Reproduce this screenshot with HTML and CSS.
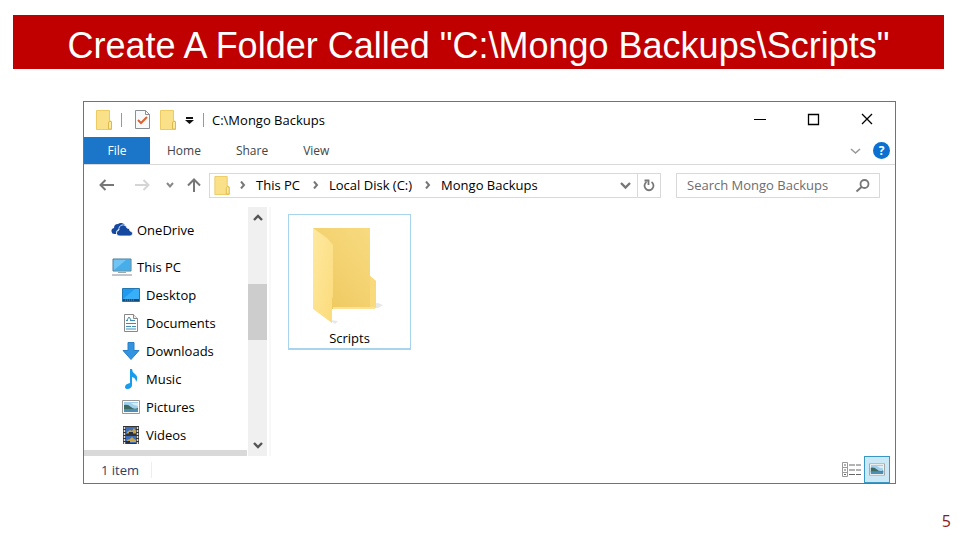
FILE: index.html
```html
<!DOCTYPE html>
<html lang="en">
<head>
    <meta charset="UTF-8">
    <meta name="viewport" content="width=device-width, initial-scale=1.0">
    <title>Create A Folder</title>
    <link rel="stylesheet" href="styles.css">
</head>
<body>
    <!-- Shared icons -->
    <svg class="defs" width="0" height="0" aria-hidden="true">
        <symbol id="folder" viewBox="0 0 16 20">
            <path d="M0.500 0.500h13v10l2 1v8h-15z" fill="#fbe08a" stroke="#eccb63"/>
            <path d="M12.500 19v-6l1-2 2 1v7z" fill="#fdeaa5" stroke="#dfb94a"/>
        </symbol>
        <symbol id="chevron" viewBox="0 0 8 8">
            <path d="M2 0.500l3 3.500-3 3.500" fill="none" stroke="#777" stroke-width="2"/>
        </symbol>
        <symbol id="picture" viewBox="0 0 18 14">
            <path d="M0.500 0.500h17v13h-17z" fill="#fff" stroke="#999"/>
            <path d="M2 2h14v10h-14z" fill="#9fd0ee"/>
            <path d="M2 5q4-1 7 2t7 1v2h-14z" fill="#3d6b63"/>
            <path d="M2 9h14v3h-14z" fill="#4b8fb5"/>
            <path d="M9 3h7v3q-4 0-7-3z" fill="#d9edf8"/>
        </symbol>
    </svg>

    <h1 class="slide-title">Create A Folder Called "C:\Mongo Backups\Scripts"</h1>

    <div class="window">
        <div class="title-bar">
            <svg class="small-folder" width="16" height="20"><use href="#folder"/></svg>
            <span class="divider"></span>
            <button class="icon-button" aria-label="Properties">
                <svg width="15" height="19" viewBox="0 0 15 19">
                    <path d="M0.500 0.500h10l4 4v14h-14z" fill="#f7f9fb" stroke="#8a8f96"/>
                    <path d="M10.500 0.500v4h4" fill="none" stroke="#8a8f96"/>
                    <path d="M3 10l3 3 6-6" fill="none" stroke="#dd6230" stroke-width="2"/>
                </svg>
            </button>
            <button class="icon-button new-folder" aria-label="New folder">
                <svg width="16" height="20"><use href="#folder"/></svg>
            </button>
            <button class="icon-button" aria-label="Customize toolbar">
                <svg width="9" height="8" viewBox="0 0 9 8">
                    <path d="M1 1h7v2h-7zM0 4h9l-4.500 4z" fill="#111"/>
                </svg>
            </button>
            <span class="divider"></span>
            <span class="window-title">C:\Mongo Backups</span>
            <div class="controls">
                <button class="icon-button" aria-label="Minimize">
                    <svg width="12" height="12"><path d="M0 5.500h12" stroke="#000"/></svg>
                </button>
                <button class="icon-button" aria-label="Maximize">
                    <svg width="12" height="12"><path d="M0.500 0.500h10v10h-10z" fill="none" stroke="#000" stroke-width="1.300"/></svg>
                </button>
                <button class="icon-button" aria-label="Close">
                    <svg width="12" height="12"><path d="M0 0l10 10M10 0l-10 10" stroke="#000" stroke-width="1.300"/></svg>
                </button>
            </div>
        </div>

        <div class="tabs">
            <button class="tab file">File</button>
            <button class="tab">Home</button>
            <button class="tab">Share</button>
            <button class="tab">View</button>
            <div class="help">
                <button class="icon-button" aria-label="Expand the ribbon">
                    <svg width="11" height="6"><path d="M1 1l4.500 4 4.500-4" fill="none" stroke="#999" stroke-width="1.600"/></svg>
                </button>
                <button class="help-button" aria-label="Help">?</button>
            </div>
        </div>

        <div class="address-row">
            <button class="icon-button" aria-label="Back">
                <svg width="15" height="12"><path d="M15 6h-13M6.500 1l-5 5 5 5" fill="none" stroke="#777" stroke-width="2"/></svg>
            </button>
            <button class="icon-button forward" aria-label="Forward">
                <svg width="15" height="12"><path d="M0 6h13M8.500 1l5 5-5 5" fill="none" stroke="#d5d5d5" stroke-width="2"/></svg>
            </button>
            <button class="icon-button" aria-label="Recent locations">
                <svg width="8" height="6"><path d="M1 1l3 3.500 3-3.500" fill="none" stroke="#888" stroke-width="2"/></svg>
            </button>
            <button class="icon-button up" aria-label="Up">
                <svg width="14" height="14"><path d="M7 14v-12M1 7.500l6-6 6 6" fill="none" stroke="#777" stroke-width="2"/></svg>
            </button>
            <div class="address">
                <svg width="16" height="19"><use href="#folder"/></svg>
                <svg width="8" height="8"><use href="#chevron"/></svg>
                <a href="#">This PC</a>
                <svg width="8" height="8"><use href="#chevron"/></svg>
                <a href="#">Local Disk (C:)</a>
                <svg width="8" height="8"><use href="#chevron"/></svg>
                <a href="#">Mongo Backups</a>
                <div class="address-buttons">
                    <button class="icon-button" aria-label="Previous locations">
                        <svg width="11" height="7"><path d="M1 1l4.500 4.500 4.500-4.500" fill="none" stroke="#777" stroke-width="2.400"/></svg>
                    </button>
                    <button class="icon-button refresh" aria-label="Refresh">
                        <svg width="12" height="13"><path d="M8.500 3a4.500 4.500 0 1 1-5 0M1.500 1.500h4v4.500" fill="none" stroke="#777" stroke-width="1.800"/></svg>
                    </button>
                </div>
            </div>
            <div class="search">
                <input type="text" aria-label="Search" placeholder="Search Mongo Backups">
                <svg width="14" height="13"><circle cx="8.500" cy="5" r="4" fill="none" stroke="#777" stroke-width="1.800"/><path d="M5.500 8l-5 4.500" stroke="#777" stroke-width="2"/></svg>
            </div>
        </div>

        <div class="content">
            <div class="sidebar">
                <ul class="tree">
                    <li class="root">
                        <svg width="20" height="14" viewBox="0 0 20 14">
                            <path d="M3 11a3 3 0 0 1-1-6 4 4 0 0 1 4-4 5 5 0 0 1 7 1l-2 1q-3 0-4 3-3 1-3 5z" fill="#1549a0"/>
                            <path d="M8 13a3 3 0 0 1-1-6 4 4 0 0 1 8-2 3 3 0 0 1 3 3 2.500 2.500 0 0 1 0 5z" fill="#1549a0" stroke="#fff" stroke-width="0.800"/>
                        </svg>
                        <a href="#">OneDrive</a>
                    </li>
                    <li class="root">
                        <svg width="20" height="18" viewBox="0 0 20 18">
                            <path d="M1 1h18v12h-18z" fill="#70c5f5" stroke="#477f9e"/>
                            <path d="M2 12l12-10h4v10z" fill="#48aeea"/>
                            <path d="M6 14.500h8" stroke="#9aa"/>
                            <path d="M0 17h20" stroke="#889"/>
                        </svg>
                        <a href="#">This PC</a>
                    </li>
                    <li>
                        <svg width="18" height="14" viewBox="0 0 18 14">
                            <path d="M0.500 0.500h17v13h-17z" fill="#1e9bf0" stroke="#2476b0"/>
                            <path d="M1 11l12-10h4v10z" fill="#38aff8"/>
                            <path d="M1 12h16" stroke="#134a77" stroke-width="2"/>
                            <path d="M3 12h9" stroke="#3aa5e8" stroke-dasharray="1 1"/>
                        </svg>
                        <a href="#">Desktop</a>
                    </li>
                    <li>
                        <svg width="18" height="18" viewBox="0 0 18 18">
                            <path d="M2.500 0.500h9l4 4v13h-13z" fill="#fff" stroke="#888"/>
                            <path d="M11.500 0.500v4h4" fill="#eee" stroke="#888"/>
                            <path d="M4 6.500h2M8 6.500h5M4 9.500h10M4 12.500h5M10 12.500h4M4 15h10" stroke="#3d8fb5"/>
                            <path d="M5 6l2-3 2 3" fill="none" stroke="#3d8fb5"/>
                        </svg>
                        <a href="#">Documents</a>
                    </li>
                    <li>
                        <svg width="18" height="18" viewBox="0 0 18 18">
                            <path d="M6 0.500h6v8h5l-8 9-8-9h5z" fill="#3293e0" stroke="#2a7fc4"/>
                        </svg>
                        <a href="#">Downloads</a>
                    </li>
                    <li>
                        <svg width="18" height="20" viewBox="0 0 18 20">
                            <path d="M8 0h2q0 3 3 5 4 3 1 8 0-4-4-5v8q0 3-4 4-3 0-3-2 0-3 5-4z" fill="#189cec"/>
                        </svg>
                        <a href="#">Music</a>
                    </li>
                    <li>
                        <svg width="18" height="14"><use href="#picture"/></svg>
                        <a href="#">Pictures</a>
                    </li>
                    <li>
                        <svg width="18" height="18" viewBox="0 0 18 18">
                            <path d="M1 0h16v18h-16z" fill="#333"/>
                            <path d="M2.500 1v17M15.500 1v17" stroke="#ddd" stroke-width="1.500" stroke-dasharray="2 1"/>
                            <path d="M4 1h10v7h-10zM4 10h10v7h-10z" fill="#3e6eb8"/>
                            <path d="M5 6l3-2 2 1 2-3 2 3v2h-9zM5 14l3-1 2-2 2 2 2 1v2h-9z" fill="#c9a547"/>
                            <path d="M7 6h4v2h-4zM4 15h4v2h-4z" fill="#282c44"/>
                        </svg>
                        <a href="#">Videos</a>
                    </li>
                </ul>
                <div class="scrollbar">
                    <svg width="10" height="7"><path d="M1 6l4-4 4 4" fill="none" stroke="#555" stroke-width="2.400"/></svg>
                    <div class="thumb"></div>
                    <svg width="10" height="7"><path d="M1 1l4 4 4-4" fill="none" stroke="#555" stroke-width="2.400"/></svg>
                </div>
            </div>
            <div class="files">
                <a class="file-item" href="#">
                    <svg width="68" height="98" viewBox="0 0 68 98">
                        <defs>
                            <linearGradient id="back" x1="1" y1="0" x2="0" y2="1">
                                <stop offset="0" stop-color="#f8dc82"/>
                                <stop offset="1" stop-color="#eec75d"/>
                            </linearGradient>
                            <linearGradient id="front" x1="0" y1="0" x2="1" y2="1">
                                <stop offset="0" stop-color="#ffe9a0"/>
                                <stop offset="1" stop-color="#fbdb7b"/>
                            </linearGradient>
                        </defs>
                        <path d="M16 81h46l5-3-5-2zM14 93l8 1-3 3z" fill="#e8e8e8"/>
                        <path d="M-3 1h57v48l6 5v26l-2 2h-44z" fill="url(#back)"/>
                        <path d="M17 80h42v1l-1 1h-41z" fill="#fbe296"/>
                        <path d="M54 49l6 5v26h-6z" fill="#f8da7c"/>
                        <path d="M-3 1l14 10 6 7v51l-1 3v24l-19-14z" fill="url(#front)"/>
                    </svg>
                    <span>Scripts</span>
                </a>
            </div>
        </div>

        <div class="status-bar">
            <span class="item-count">1 item</span>
            <div class="views">
                <button class="icon-button" aria-label="Details view">
                    <svg width="20" height="16" viewBox="0 0 20 16">
                        <path d="M0.500 0.500h5v5h-5zM0.500 5.500h5v5h-5zM0.500 10.500h5v4h-5z" fill="#fff" stroke="#999"/>
                        <path d="M2 3h2M2 8h2M2 12.500h2M7 3h6M14 3h5M7 8h6M14 8h5M7 12.500h6M14 12.500h5" stroke="#666"/>
                    </svg>
                </button>
                <button class="view-active" aria-label="Large icons view">
                    <svg width="16" height="13" viewBox="0 0 18 14"><use href="#picture"/></svg>
                </button>
            </div>
        </div>
    </div>

    <footer>5</footer>
</body>
</html>
```
FILE: styles.css
```css
* {
    box-sizing: border-box;
}

body {
    margin: 0;
    padding: 15px 0 8px;
    min-height: 100vh;
    display: flex;
    flex-direction: column;
    background-color: #fff;
    color: #000;
    font-family: "Open Sans", "Noto Sans", sans-serif;
    font-size: 13px;
    line-height: 16px;
}

.defs {
    position: absolute;
}

svg {
    display: block;
    flex: none;
    overflow: visible;
}

a {
    color: inherit;
    text-decoration: none;
    white-space: nowrap;
}

button {
    border: 0;
    padding: 0;
    background: none;
    font: inherit;
    color: inherit;
}

.slide-title {
    margin: 0 16px 0 13px;
    padding: 11px 0 3px;
    background-color: #c00000;
    color: #fff;
    font-family: "Liberation Sans", Arial, sans-serif;
    font-size: 36px;
    font-weight: normal;
    line-height: 40px;
    text-align: center;
}

/* Explorer window */
.window {
    margin: 32px 64px 0 83px;
    border: 1px solid #3a86a5;
}

.title-bar {
    display: flex;
    align-items: center;
    height: 35px;
    padding: 0 21px 0 12px;
}

.divider {
    width: 1px;
    height: 14px;
    margin: 0 13px 0 9px;
    background-color: #999;
}

.new-folder {
    margin: 0 9px 0 10px;
}

.title-bar .icon-button + .divider {
    margin-right: 8px;
}

.controls {
    display: flex;
    gap: 42px;
    margin-left: auto;
}

.tabs {
    display: flex;
    height: 28px;
    border-bottom: 1px solid #d9d9d9;
    color: #444;
    font-size: 12px;
}

.tab {
    padding: 0 17px;
    margin-right: 1px;
}

.file {
    width: 66px;
    margin: 0;
    background-color: #1b76c9;
    color: #fff;
}

.help {
    display: flex;
    align-items: center;
    gap: 12px;
    margin-left: auto;
    padding-right: 5px;
}

.help-button {
    width: 17px;
    height: 17px;
    border-radius: 50%;
    background-color: #0b70cf;
    color: #fff;
    font-weight: bold;
}

.address-row {
    display: flex;
    align-items: center;
    height: 42px;
    padding: 0 15px 2px;
}

.forward {
    margin: 0 16px 0 21px;
}

.up {
    margin: 0 8px 0 13px;
}

.address {
    display: flex;
    flex: 1;
    align-items: center;
    gap: 9px;
    height: 25px;
    padding-left: 4px;
    border: 1px solid #d9d9d9;
}

.address a {
    margin-right: 3px;
}

.address-buttons {
    display: flex;
    align-items: center;
    align-self: stretch;
    margin-left: auto;
}

.refresh {
    display: flex;
    align-items: center;
    align-self: stretch;
    margin-left: 6px;
    padding: 0 5px;
    border-left: 1px solid #d9d9d9;
}

.search {
    display: flex;
    align-items: center;
    width: 204px;
    height: 25px;
    margin-left: 15px;
    padding: 0 9px 0 10px;
    border: 1px solid #d9d9d9;
}

.search input {
    flex: 1;
    min-width: 0;
    border: 0;
    padding: 0;
    font: inherit;
    outline: none;
}

.search input::placeholder {
    color: #6d6d6d;
    opacity: 1;
}

.content {
    display: flex;
}

.sidebar {
    display: flex;
    width: 187px;
    border-right: 2px solid #f8f8f8;
}

.tree {
    flex: 1;
    margin: 0;
    padding: 9px 0 1px 38px;
    border-bottom: 6px solid #d9d9d9;
    list-style: none;
}

.tree li {
    display: flex;
    align-items: center;
    gap: 6px;
    height: 28px;
}

.tree .root {
    gap: 5px;
    margin-left: -10px;
}

.tree .root + .root {
    margin-top: 9px;
}

.scrollbar {
    display: flex;
    flex-direction: column;
    align-items: center;
    width: 19px;
    margin: 0 2px 0 1px;
    padding: 7px 0;
    background-color: #f0f0f0;
}

.thumb {
    width: 100%;
    height: 56px;
    margin: 63px 0 auto;
    background-color: #cdcdcd;
}

.files {
    flex: 1;
    padding: 7px 17px;
}

.file-item {
    display: flex;
    flex-direction: column;
    align-items: center;
    gap: 5px;
    width: 123px;
    height: 136px;
    padding-top: 12px;
    border: 1px solid #a8d4ee;
    border-bottom-width: 2px;
}

.status-bar {
    display: flex;
    align-items: center;
    height: 27px;
    padding: 0 5px 0 17px;
}

.item-count {
    padding-right: 12px;
    border-right: 1px solid #eee;
    color: #2a3f66;
}

.views {
    display: flex;
    align-items: center;
    gap: 2px;
    margin-left: auto;
}

.view-active {
    display: flex;
    align-items: center;
    justify-content: center;
    width: 26px;
    height: 27px;
    border: 1px solid #3a97c3;
    background-color: #cbe8f6;
}

footer {
    margin-top: auto;
    padding-right: 9px;
    color: #8b1a1a;
    font-size: 16px;
    line-height: 22px;
    text-align: right;
}
```
